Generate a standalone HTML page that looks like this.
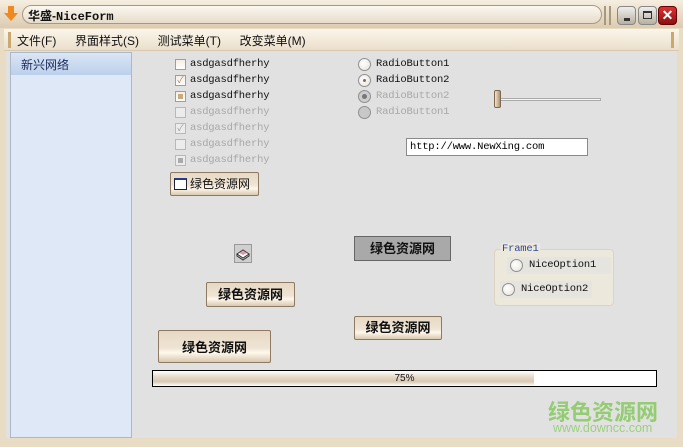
<!DOCTYPE html>
<html><head><meta charset="utf-8"><style>
*{margin:0;padding:0;box-sizing:border-box}
body{width:683px;height:447px;overflow:hidden;background:#e9dcc4;font-family:"Liberation Sans","Noto Sans CJK SC",sans-serif;position:relative}
.a{position:absolute}
.mono{font-family:"Liberation Mono","Noto Sans CJK SC",monospace;font-size:10.5px;letter-spacing:-0.2px}
.cb{position:absolute;width:11px;height:11px;border:1px solid #b49a74;background:linear-gradient(#f4eee4,#fff)}
.cb.d{border-color:#b8b8b8;background:#ececec}
.rb{position:absolute;width:13px;height:13px;border-radius:50%;border:1px solid #8f8f8f;background:radial-gradient(circle at 40% 40%,#fff,#e6e2da)}
.btn{position:absolute;border:1px solid #8e7a62;border-radius:2px;background:linear-gradient(#e6d8c4 0%,#efe4d4 55%,#fff8ec 70%,#d8c8b0 100%);font-weight:bold;color:#111;text-align:center}
</style></head><body>
<div class="a" style="left:0;top:0;width:683px;height:28px;background:linear-gradient(#f6eee0,#dccbb0)"></div>
<div class="a" style="left:4px;top:6px;width:14px;height:16px;"><svg width="14" height="16"><path d="M4 0h6v7h4L7 15 0 7h4z" fill="#f08a20"/></svg></div>
<div class="a" style="left:22px;top:5px;width:580px;height:19px;border:1px solid #a89880;border-radius:10px;background:linear-gradient(#fbf7ef,#e6dccb)"></div>
<div class="a" style="left:28px;top:7px;font-size:12px;font-weight:bold;color:#111">华盛-<span style="font-family:'Liberation Mono',monospace">NiceForm</span></div>
<div class="a" style="left:604px;top:6px;width:2px;height:19px;background:#a89880"></div>
<div class="a" style="left:609px;top:6px;width:2px;height:19px;background:#a89880"></div>
<div class="a" style="left:617px;top:6px;width:19px;height:19px;border:1px solid #888;border-radius:4px;background:linear-gradient(#eee,#b8b0a0)"><div class="a" style="left:6px;top:11px;width:6px;height:3px;background:#333"></div></div>
<div class="a" style="left:638px;top:6px;width:19px;height:19px;border:1px solid #888;border-radius:4px;background:linear-gradient(#eee,#b8b0a0)"><div class="a" style="left:4px;top:4px;width:9px;height:8px;border:1px solid #333;border-top-width:2px"></div></div>
<div class="a" style="left:658px;top:6px;width:19px;height:19px;border:1px solid #600;border-radius:4px;background:linear-gradient(#d33,#8a1010);color:#fff;font-weight:bold;font-size:14px;line-height:17px;text-align:center">✕</div>
<div class="a" style="left:4px;top:29px;width:675px;height:22px;background:linear-gradient(#fbf5ea,#eadfcc);border-bottom:1px solid #d8c8ae"></div>
<div class="a" style="left:8px;top:32px;width:3px;height:16px;background:#c9a96f"></div>
<div class="a" style="left:671px;top:32px;width:3px;height:16px;background:#c9a96f"></div>
<div class="a" style="left:17px;top:32px;font-size:12px;color:#111;word-spacing:6px;white-space:pre">文件(F)  界面样式(S)  测试菜单(T)  改变菜单(M)</div>
<div class="a" style="left:6px;top:51px;width:671px;height:387px;background:#e1e1e1"></div>
<div class="a" style="left:10px;top:52px;width:122px;height:386px;border:1px solid #aab8c8;background:#dfe8f6"></div>
<div class="a" style="left:11px;top:53px;width:120px;height:22px;background:linear-gradient(#dbe6f5,#bcd0ec)"></div>
<div class="a" style="left:21px;top:56px;font-size:12px;color:#1a2a5a">新兴网络</div>
<div class="cb" style="left:175px;top:59px"></div><div class="a mono" style="left:190px;top:58px;color:#111">asdgasdfherhy</div>
<div class="cb" style="left:175px;top:75px;color:#a08868;font-size:9px;line-height:9px;text-align:center">✓</div><div class="a mono" style="left:190px;top:74px;color:#111">asdgasdfherhy</div>
<div class="cb" style="left:175px;top:91px"><div class="a" style="left:2px;top:2px;width:5px;height:5px;background:#c8aa80"></div></div><div class="a mono" style="left:190px;top:90px;color:#111">asdgasdfherhy</div>
<div class="cb d" style="left:175px;top:107px"></div><div class="a mono" style="left:190px;top:106px;color:#a8a8a8">asdgasdfherhy</div>
<div class="cb d" style="left:175px;top:123px;color:#999;font-size:9px;line-height:9px;text-align:center">✓</div><div class="a mono" style="left:190px;top:122px;color:#a8a8a8">asdgasdfherhy</div>
<div class="cb d" style="left:175px;top:139px"></div><div class="a mono" style="left:190px;top:138px;color:#a8a8a8">asdgasdfherhy</div>
<div class="cb d" style="left:175px;top:155px"><div class="a" style="left:2px;top:2px;width:5px;height:5px;background:#aaa"></div></div><div class="a mono" style="left:190px;top:154px;color:#a8a8a8">asdgasdfherhy</div>
<div class="btn" style="left:170px;top:172px;width:89px;height:24px;font-weight:normal;font-size:12px;line-height:22px;text-align:left;padding-left:19px">绿色资源网<div class="a" style="left:3px;top:5px;width:13px;height:12px;border:1px solid #223;border-top:2px solid #2a3a8a;background:#fff"></div></div>
<div class="rb" style="left:358px;top:58px"></div><div class="a mono" style="left:376px;top:58px;color:#111">RadioButton1</div>
<div class="rb" style="left:358px;top:74px"><div class="a" style="left:4px;top:4px;width:3px;height:3px;border-radius:50%;background:#8a6a40"></div></div><div class="a mono" style="left:376px;top:74px;color:#111">RadioButton2</div>
<div class="rb" style="left:358px;top:90px;background:#ccc"><div class="a" style="left:3px;top:3px;width:5px;height:5px;border-radius:50%;background:#777"></div></div><div class="a mono" style="left:376px;top:90px;color:#a8a8a8">RadioButton2</div>
<div class="rb" style="left:358px;top:106px;background:#c8c8c8"></div><div class="a mono" style="left:376px;top:106px;color:#a8a8a8">RadioButton1</div>
<div class="a" style="left:498px;top:98px;width:103px;height:3px;border:1px solid #aaa;background:#f4f4f4"></div>
<div class="a" style="left:494px;top:90px;width:7px;height:18px;border:1px solid #806850;border-radius:2px;background:linear-gradient(90deg,#f0e4d0,#b09070)"></div>
<div class="a mono" style="left:406px;top:138px;width:182px;height:18px;border:1px solid #8a8a8a;background:#fff;padding:2px 0 0 3px;color:#000">http://www.NewXing.com</div>
<div class="a" style="left:234px;top:244px;width:18px;height:19px;border:1px solid #999;background:#cfcfcf"><svg width="16" height="16" style="position:absolute;left:0;top:1px"><path d="M2 8l6-4 6 4-6 4z" fill="#fff" stroke="#333"/><path d="M4 7l4-2 4 2-4 2z" fill="#d9a" /><path d="M2 8v2l6 4 6-4V8" fill="none" stroke="#333"/></svg></div>
<div class="a" style="left:354px;top:236px;width:97px;height:25px;border:1px solid #666;background:#a9a9a9;font-weight:bold;font-size:13px;line-height:23px;text-align:center;color:#111">绿色资源网</div>
<div class="btn" style="left:206px;top:282px;width:89px;height:25px;font-size:13px;line-height:24px">绿色资源网</div>
<div class="btn" style="left:354px;top:316px;width:88px;height:24px;font-size:13px;line-height:22px">绿色资源网</div>
<div class="btn" style="left:158px;top:330px;width:113px;height:33px;font-size:13px;line-height:34px">绿色资源网</div>
<div class="a" style="left:494px;top:249px;width:120px;height:57px;border:1px solid #dcd4c0;border-radius:4px;background:#ece8dc"></div>
<div class="a mono" style="left:501px;top:243px;color:#2a4a9a;background:#ece8dc;padding:0 1px">Frame1</div>
<div class="a" style="left:507px;top:257px;width:104px;height:17px;background:#e6e4de"></div>
<div class="rb" style="left:510px;top:259px"></div><div class="a mono" style="left:529px;top:259px;color:#111">NiceOption1</div>
<div class="a" style="left:500px;top:281px;width:92px;height:17px;background:#e6e4de"></div>
<div class="rb" style="left:502px;top:283px"></div><div class="a mono" style="left:521px;top:283px;color:#111">NiceOption2</div>
<div class="a" style="left:152px;top:370px;width:505px;height:17px;border:1px solid #000;background:#fff"></div>
<div class="a" style="left:153px;top:371px;width:381px;height:15px;background:linear-gradient(#fff 0%,#e6dac8 40%,#d8c8b0 70%,#fff 100%)"></div>
<div class="a" style="left:152px;top:373px;width:505px;text-align:center;font-size:10px;color:#111">75%</div>
<div class="a" style="left:548px;top:395px;font-size:22px;font-weight:bold;color:#93cc72">绿色资源网</div>
<div class="a" style="left:553px;top:421px;font-size:12.5px;color:#9ccf80">www.downcc.com</div>
</body></html>
